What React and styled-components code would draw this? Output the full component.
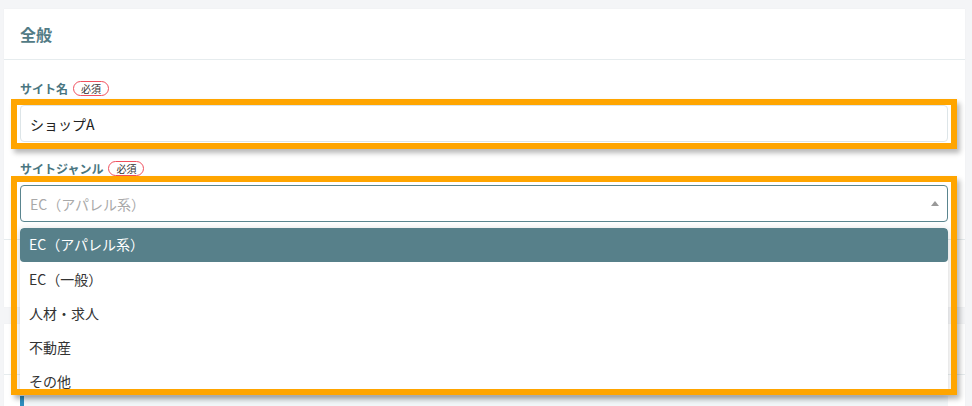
import React from "react";
import styled, { createGlobalStyle } from "styled-components";

const GlobalStyle = createGlobalStyle`
  html, body {
    margin: 0;
    padding: 0;
    background: #f4f5f7;
    font-family: "Noto Sans CJK JP", "Noto Sans", sans-serif;
    overflow: hidden;
  }
`;

const Page = styled.div`
  display: flex;
  flex-direction: column;
  gap: 17px;
  padding: 9px 7px 0 4px;
  height: 406px;
  box-sizing: border-box;
`;

const Card = styled.section`
  background: #fff;
  box-shadow: 0 0 1px rgba(0, 0, 0, 0.06);
`;

const CardHeader = styled.header`
  height: 50px;
  display: flex;
  align-items: center;
  padding: 0 16px;
  border-bottom: 1px solid #e6ecee;
`;

const CardTitle = styled.h2`
  margin: 0;
  font-size: 16px;
  font-weight: 700;
  color: #527b85;
`;

const CardBody = styled.div`
  padding: 21px 17px 17px 16px;
  display: flex;
  flex-direction: column;
  gap: 19px;
`;

const CardFooter = styled.div`
  height: 67px;
  border-top: 1px solid #e6ecee;
`;

const Field = styled.div`
  display: flex;
  flex-direction: column;
  gap: 9px;
`;

const LabelRow = styled.div`
  display: flex;
  align-items: center;
  gap: 5px;
  height: 15px;
`;

const Label = styled.label`
  font-size: 12px;
  font-weight: 700;
  color: #4a7681;
`;

const Badge = styled.span`
  display: inline-flex;
  align-items: center;
  height: 13px;
  padding: 0 7px;
  border: 1px solid #f0505e;
  border-radius: 8px;
  font-size: 10px;
  color: #333;
`;

const Control = styled.div`
  position: relative;
`;

const Input = styled.div`
  height: 37px;
  box-sizing: border-box;
  border: 1px solid #dde5e8;
  border-radius: 4px;
  padding: 0 9px;
  display: flex;
  align-items: center;
  font-size: 14px;
  color: #222;
`;

const Select = styled.div`
  height: 37px;
  box-sizing: border-box;
  border: 1px solid #5a858f;
  border-radius: 4px;
  padding: 0 9px;
  display: flex;
  align-items: center;
  justify-content: space-between;
  font-size: 14px;
  color: #a9a9a9;
`;

const Caret = styled.span`
  width: 0;
  height: 0;
  border-left: 4px solid transparent;
  border-right: 4px solid transparent;
  border-bottom: 5px solid #999;
  margin-right: -1px;
`;

const Menu = styled.ul`
  position: absolute;
  top: calc(100% + 6px);
  left: 0;
  right: 0;
  margin: 0;
  padding: 0;
  list-style: none;
  max-height: 166px;
  overflow: hidden;
  background: #fff;
  border-radius: 4px;
  box-shadow: 0 2px 8px rgba(0, 0, 0, 0.18);
  z-index: 5;
`;

const Option = styled.li`
  height: 34px;
  padding: 0 9px;
  display: flex;
  align-items: center;
  padding-bottom: ${({ $active }) => ($active ? "3px" : "0")};
  box-sizing: border-box;
  font-size: 14px;
  color: ${({ $active }) => ($active ? "#fff" : "#333")};
  background: ${({ $active }) => ($active ? "#57808a" : "transparent")};
  border-radius: ${({ $active }) => ($active ? "4px" : "0")};
`;

const Highlight = styled.div`
  position: absolute;
  top: ${({ $top }) => $top}px;
  left: -9px;
  right: -9px;
  height: ${({ $height }) => $height}px;
  box-sizing: border-box;
  border: 6px solid #ffa500;
  box-shadow: 3px 4px 5px rgba(0, 0, 0, 0.28);
  pointer-events: none;
  z-index: 10;
`;

const Notice = styled.div`
  border-left: 4px solid #2d8fbf;
  background: #f1f6f8;
  padding: 6px 12px 6px 80px;
  font-size: 13px;
  color: #5a858f;
  white-space: nowrap;
`;

const genres = ["EC（アパレル系）", "EC（一般）", "人材・求人", "不動産", "その他"];

export default function App() {
  return (
    <>
      <GlobalStyle />
      <Page>
        <Card>
          <CardHeader>
            <CardTitle>全般</CardTitle>
          </CardHeader>
          <CardBody>
            <Field>
              <LabelRow>
                <Label>サイト名</Label>
                <Badge>必須</Badge>
              </LabelRow>
              <Control>
                <Input>ショップA</Input>
                <Highlight $top={-6} $height={50} />
              </Control>
            </Field>
            <Field>
              <LabelRow>
                <Label>サイトジャンル</Label>
                <Badge>必須</Badge>
              </LabelRow>
              <Control>
                <Select>
                  EC（アパレル系）
                  <Caret />
                </Select>
                <Menu>
                  {genres.map((g, i) => (
                    <Option key={g} $active={i === 0}>
                      {g}
                    </Option>
                  ))}
                </Menu>
                <Highlight $top={-9} $height={219} />
              </Control>
            </Field>
          </CardBody>
          <CardFooter />
        </Card>
        <Card>
          <CardHeader>
            <CardTitle>SEO設定</CardTitle>
          </CardHeader>
          <CardBody>
            <Notice>メタタグやOGP画像の設定は、サイト公開前に必ず確認してください。</Notice>
          </CardBody>
        </Card>
      </Page>
    </>
  );
}
